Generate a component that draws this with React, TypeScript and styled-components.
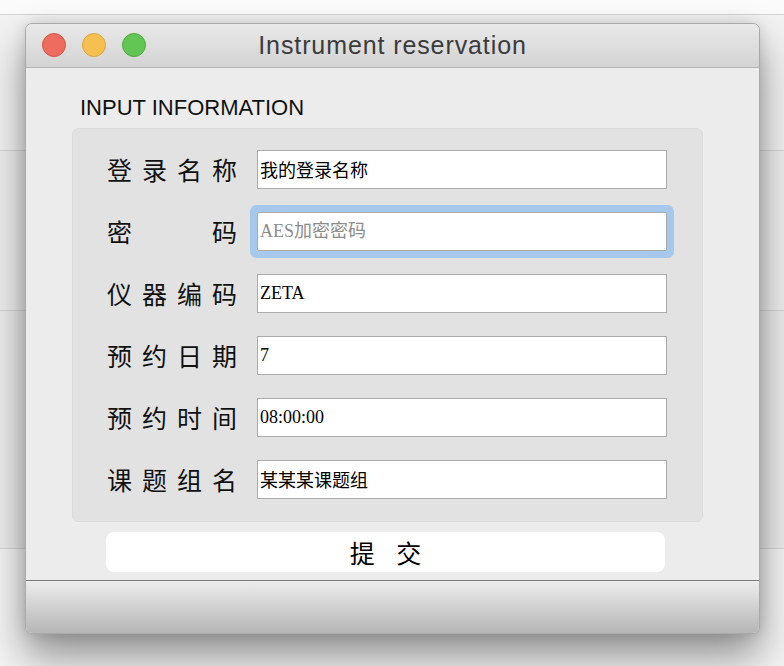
import styled, { createGlobalStyle } from 'styled-components';

const GlobalStyle = createGlobalStyle`
  html, body {
    margin: 0;
    padding: 0;
    background: #f4f4f4;
  }
`;

const Desktop = styled.div`
  height: 666px;
  overflow: hidden;
  position: relative;
  width: 784px;
`;

const Band = styled.div<{ $h: number; $bg: string }>`
  background: ${(p) => p.$bg};
  border-bottom: 1px solid #d6d6d6;
  height: ${(p) => p.$h}px;
`;

const Window = styled.section`
  background: #ececec;
  border: 1px solid #a9a9a9;
  border-radius: 7px;
  box-shadow: 0 22px 40px rgba(0, 0, 0, 0.42), 0 0 14px rgba(0, 0, 0, 0.12);
  display: flex;
  flex-direction: column;
  height: 609px;
  left: 25px;
  overflow: hidden;
  position: absolute;
  top: 23px;
  width: 733px;
`;

const TitleBar = styled.header`
  align-items: center;
  background: linear-gradient(#e9e9e9, #d3d3d3);
  border-bottom: 1px solid #b4b4b4;
  display: flex;
  height: 43px;
`;

const Lights = styled.div`
  display: flex;
  flex: 0 0 120px;
  gap: 16px;
  padding-left: 16px;
  box-sizing: border-box;
`;

const Light = styled.span<{ $fill: string; $edge: string }>`
  background: ${(p) => p.$fill};
  border: 1px solid ${(p) => p.$edge};
  border-radius: 50%;
  box-sizing: border-box;
  height: 24px;
  width: 24px;
`;

const Title = styled.h1`
  color: #3b3b3b;
  flex: 1;
  font-family: 'Liberation Sans', Arial, sans-serif;
  font-size: 25px;
  font-weight: normal;
  letter-spacing: 0.9px;
  margin: 0 0 0 -120px;
  text-align: center;
`;

const Body = styled.main`
  display: flex;
  flex: 1;
  flex-direction: column;
  padding: 28px 56px 0 46px;
`;

const Heading = styled.h2`
  color: #111;
  font-family: 'Liberation Sans', Arial, sans-serif;
  font-size: 22px;
  font-weight: normal;
  line-height: 24px;
  margin: 0 0 8px 8px;
`;

const Group = styled.div`
  background: #e2e2e2;
  border: 1px solid #dcdcdc;
  border-radius: 6px;
  display: flex;
  flex-direction: column;
  gap: 23px;
  padding: 21px 34px 22px;
`;

const Row = styled.label`
  align-items: center;
  display: flex;
  gap: 20px;
`;

const Label = styled.span`
  color: #111;
  font-family: 'Noto Sans CJK SC', sans-serif;
  font-size: 25px;
  line-height: 39px;
  text-align: justify;
  text-align-last: justify;
  width: 130px;
`;

const Field = styled.input<{ $focused?: boolean }>`
  background: #fff;
  border: 1px solid #ababab;
  border-radius: ${(p) => (p.$focused ? '2px' : '0')};
  box-shadow: ${(p) => (p.$focused ? '0 0 0 7px #a5c8ec' : 'none')};
  box-sizing: border-box;
  color: #000;
  font-family: 'Liberation Serif', 'Noto Sans CJK SC', serif;
  font-size: 18px;
  height: 39px;
  outline: none;
  padding: 0 2px;
  width: 410px;

  &::placeholder {
    color: #8c8c8c;
  }
`;

const Submit = styled.button`
  background: #fff;
  border: none;
  border-radius: 8px;
  color: #000;
  font-family: 'Noto Sans CJK SC', sans-serif;
  font-size: 25px;
  height: 40px;
  margin: 10px 38px 0 34px;
  word-spacing: 16px;
`;

const StatusBar = styled.footer`
  background: linear-gradient(#ececec, #b6b6b6);
  border-top: 1px solid #7a7a7a;
  height: 53px;
  margin-top: 8px;
`;

const fields = [
  { label: '登 录 名 称', value: '我的登录名称' },
  { label: '密 码', placeholder: 'AES加密密码', focused: true },
  { label: '仪 器 编 码', value: 'ZETA' },
  { label: '预 约 日 期', value: '7' },
  { label: '预 约 时 间', value: '08:00:00' },
  { label: '课 题 组 名', value: '某某某课题组' },
];

const App: React.FC = () => {
  return (
    <>
      <GlobalStyle />
      <Desktop>
        <Band $h={14} $bg="#fbfbfb" />
        <Band $h={135} $bg="#f2f2f2" />
        <Band $h={159} $bg="#eeeeee" />
        <Band $h={237} $bg="#ececec" />

        <Window>
          <TitleBar>
            <Lights>
              <Light $fill="#ed6b5f" $edge="#d5554a" />
              <Light $fill="#f5c04f" $edge="#d9a540" />
              <Light $fill="#62c655" $edge="#4fa940" />
            </Lights>
            <Title>Instrument reservation</Title>
          </TitleBar>

          <Body>
            <Heading>INPUT INFORMATION</Heading>
            <Group>
              {fields.map((f) => (
                <Row key={f.label}>
                  <Label>{f.label}</Label>
                  <Field
                    $focused={f.focused}
                    defaultValue={f.value}
                    placeholder={f.placeholder}
                  />
                </Row>
              ))}
            </Group>
            <Submit>提 交</Submit>
          </Body>

          <StatusBar />
        </Window>
      </Desktop>
    </>
  );
};

export default App;
